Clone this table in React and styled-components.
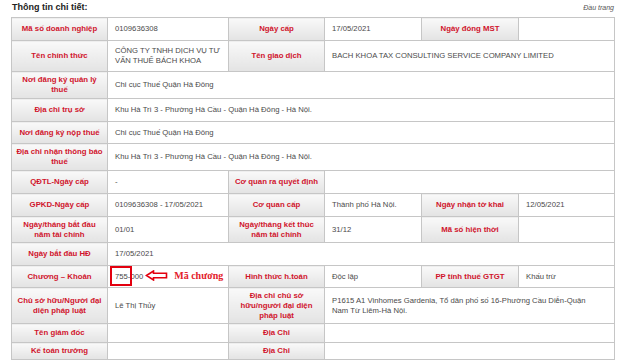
import React from 'react';
import styled, { createGlobalStyle } from 'styled-components';

const GlobalStyle = createGlobalStyle`
  html, body {
    margin: 0;
    padding: 0;
    background: #fff;
  }
  body {
    font-family: "Liberation Sans", Arial, sans-serif;
  }
`;

const Page = styled.div`
  width: 603px;
  padding-left: 11px;
`;

const Header = styled.div`
  display: flex;
  justify-content: space-between;
  align-items: baseline;
  height: 17px;
  box-sizing: border-box;
  padding-top: 2px;
`;

const Title = styled.h3`
  margin: 0;
  padding-left: 1px;
  font-size: 9px;
  line-height: 11px;
  font-weight: bold;
  color: #222;
`;

const TopLink = styled.a`
  font-size: 7px;
  font-style: italic;
  color: #555;
  text-decoration: none;
`;

const Table = styled.table`
  width: 603px;
  table-layout: fixed;
  border-collapse: collapse;
`;

const Row = styled.tr`
  height: ${(p) => p.$h}px;
`;

const Label = styled.td`
  background: linear-gradient(#f9f9f9, #e3e3e3);
  border: 1px solid #c6c6c6;
  padding: 0 4px;
  color: #d0142c;
  font-size: 7.8px;
  line-height: 10px;
  font-weight: bold;
  text-align: center;
  vertical-align: middle;
`;

const Value = styled.td`
  background: #fff;
  border: 1px solid #c6c6c6;
  padding: 0 ${(p) => p.$pr || 4}px 0 7px;
  color: #4a4a4a;
  font-size: 7.7px;
  line-height: 10px;
  text-align: left;
  vertical-align: middle;
`;

const Code = styled.span`
  position: relative;
`;

const Boxed = styled.span`
  position: relative;
  &::after {
    content: '';
    position: absolute;
    left: -5px;
    top: -6px;
    width: 22px;
    height: 20px;
    border: 2px solid #e3000f;
    box-sizing: border-box;
  }
`;

const ArrowIcon = styled.svg`
  vertical-align: middle;
  margin-left: 2px;
  margin-top: -2px;
`;

const Note = styled.span`
  margin-left: 6px;
  font-family: "Liberation Serif", "Times New Roman", serif;
  font-weight: bold;
  font-size: 10px;
  color: #e3202b;
`;

const Arrow = () => (
  <ArrowIcon width="23" height="11" viewBox="0 0 23 11">
    <path
      d="M1.5 5.5 L8.5 1 L8.5 3.3 L21.5 3.3 L21.5 7.7 L8.5 7.7 L8.5 10 Z"
      fill="#fff"
      stroke="#e3000f"
      strokeWidth="1.6"
      strokeLinejoin="miter"
    />
  </ArrowIcon>
);

const App = () => {
  return (
    <Page>
      <GlobalStyle />
      <Header>
        <Title>Thông tin chi tiết:</Title>
        <TopLink href="#">Đầu trang</TopLink>
      </Header>
      <Table>
        <colgroup>
          <col style={{ width: 96 }} />
          <col style={{ width: 121 }} />
          <col style={{ width: 96 }} />
          <col style={{ width: 97 }} />
          <col style={{ width: 97 }} />
          <col style={{ width: 96 }} />
        </colgroup>
        <tbody>
          <Row $h={23}>
            <Label>Mã số doanh nghiệp</Label>
            <Value>0109636308</Value>
            <Label>Ngày cấp</Label>
            <Value>17/05/2021</Value>
            <Label>Ngày đóng MST</Label>
            <Value></Value>
          </Row>
          <Row $h={31}>
            <Label>Tên chính thức</Label>
            <Value>CÔNG TY TNHH DỊCH VỤ TƯ VẤN THUẾ BÁCH KHOA</Value>
            <Label>Tên giao dịch</Label>
            <Value colSpan={3}>BACH KHOA TAX CONSULTING SERVICE COMPANY LIMITED</Value>
          </Row>
          <Row $h={27}>
            <Label>Nơi đăng ký quản lý thuế</Label>
            <Value colSpan={5}>Chi cục Thuế Quận Hà Đông</Value>
          </Row>
          <Row $h={23}>
            <Label>Địa chỉ trụ sở</Label>
            <Value colSpan={5}>Khu Hà Trì 3 - Phường Hà Cầu - Quận Hà Đông - Hà Nội.</Value>
          </Row>
          <Row $h={22}>
            <Label>Nơi đăng ký nộp thuế</Label>
            <Value colSpan={5}>Chi cục Thuế Quận Hà Đông</Value>
          </Row>
          <Row $h={27}>
            <Label>Địa chỉ nhận thông báo thuế</Label>
            <Value colSpan={5}>Khu Hà Trì 3 - Phường Hà Cầu - Quận Hà Đông - Hà Nội.</Value>
          </Row>
          <Row $h={23}>
            <Label>QĐTL-Ngày cấp</Label>
            <Value>-</Value>
            <Label>Cơ quan ra quyết định</Label>
            <Value colSpan={3}></Value>
          </Row>
          <Row $h={23}>
            <Label>GPKD-Ngày cấp</Label>
            <Value>0109636308 - 17/05/2021</Value>
            <Label>Cơ quan cấp</Label>
            <Value>Thành phố Hà Nội.</Value>
            <Label>Ngày nhận tờ khai</Label>
            <Value>12/05/2021</Value>
          </Row>
          <Row $h={26}>
            <Label>Ngày/tháng bắt đầu năm tài chính</Label>
            <Value>01/01</Value>
            <Label>Ngày/tháng kết thúc năm tài chính</Label>
            <Value>31/12</Value>
            <Label>Mã số hiện thời</Label>
            <Value></Value>
          </Row>
          <Row $h={23}>
            <Label>Ngày bắt đầu HĐ</Label>
            <Value colSpan={5}>17/05/2021</Value>
          </Row>
          <Row $h={22}>
            <Label>Chương – Khoản</Label>
            <Value>
              <Code>
                <Boxed>755</Boxed>-000
              </Code>
              <Arrow />
              <Note>Mã chương</Note>
            </Value>
            <Label>Hình thức h.toán</Label>
            <Value>Độc lập</Value>
            <Label>PP tính thuế GTGT</Label>
            <Value>Khấu trừ</Value>
          </Row>
          <Row $h={36}>
            <Label>Chủ sở hữu/Người đại diện pháp luật</Label>
            <Value>Lê Thị Thủy</Value>
            <Label>Địa chỉ chủ sở hữu/người đại diện pháp luật</Label>
            <Value colSpan={3} $pr={18}>
              P1615 A1 Vinhomes Gardenia, Tổ dân phố số 16-Phường Cầu Diễn-Quận Nam Từ Liêm-Hà Nội.
            </Value>
          </Row>
          <Row $h={19}>
            <Label>Tên giám đốc</Label>
            <Value></Value>
            <Label>Địa Chỉ</Label>
            <Value colSpan={3}></Value>
          </Row>
          <Row $h={17}>
            <Label>Kế toán trưởng</Label>
            <Value></Value>
            <Label>Địa Chỉ</Label>
            <Value colSpan={3}></Value>
          </Row>
        </tbody>
      </Table>
    </Page>
  );
};

export default App;
